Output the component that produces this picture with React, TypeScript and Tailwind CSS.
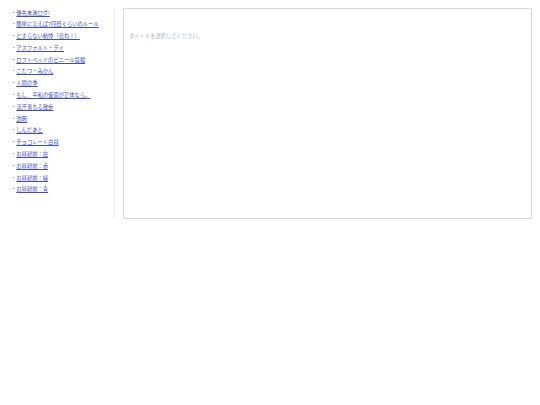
const titles = [
  "優先未遂ログ!",
  "簡単に言えば7回目くらいのルール",
  "とまらない動悸（恋ね！）",
  "アスファルト・デイ",
  "ロフトベッドのビニール袋猫",
  "こたつ・みかん",
  "人間の季",
  "もし、平和の仮面が正体なら。",
  "流汗落ちる散歩",
  "透明",
  "しんだあと",
  "チョコレート白昼",
  "お昼寝前：白",
  "お昼寝前：赤",
  "お昼寝前：緑",
  "お昼寝前：青",
];

export default function App() {
  return (
    <div className="w-[540px] h-[405px] bg-white flex items-start font-['Noto_Sans_CJK_JP',sans-serif]">
      {/* 一覧 */}
      <ul className="w-[114px] pl-[11px] pt-[7.5px] shrink-0">
        {titles.map((t) => (
          <li key={t} className="text-[5.3px] leading-[11.8px] h-[11.8px] whitespace-nowrap">
            <span className="text-[#888]">・</span>
            <a href="#" className="text-[#4050b8] underline">
              {t}
            </a>
          </li>
        ))}
      </ul>
      <div className="w-px h-[210px] mt-[8px] bg-[#ececec] shrink-0" />
      {/* 本文 */}
      <div className="ml-[8px] mt-[8px] w-[409px] h-[211px] border border-[#d4dbe2] pl-[5px] pt-[23px] shrink-0">
        <p className="text-[5.3px] text-[#aab4be] leading-[8px]">タイトルを選択してください。</p>
      </div>
    </div>
  );
}
